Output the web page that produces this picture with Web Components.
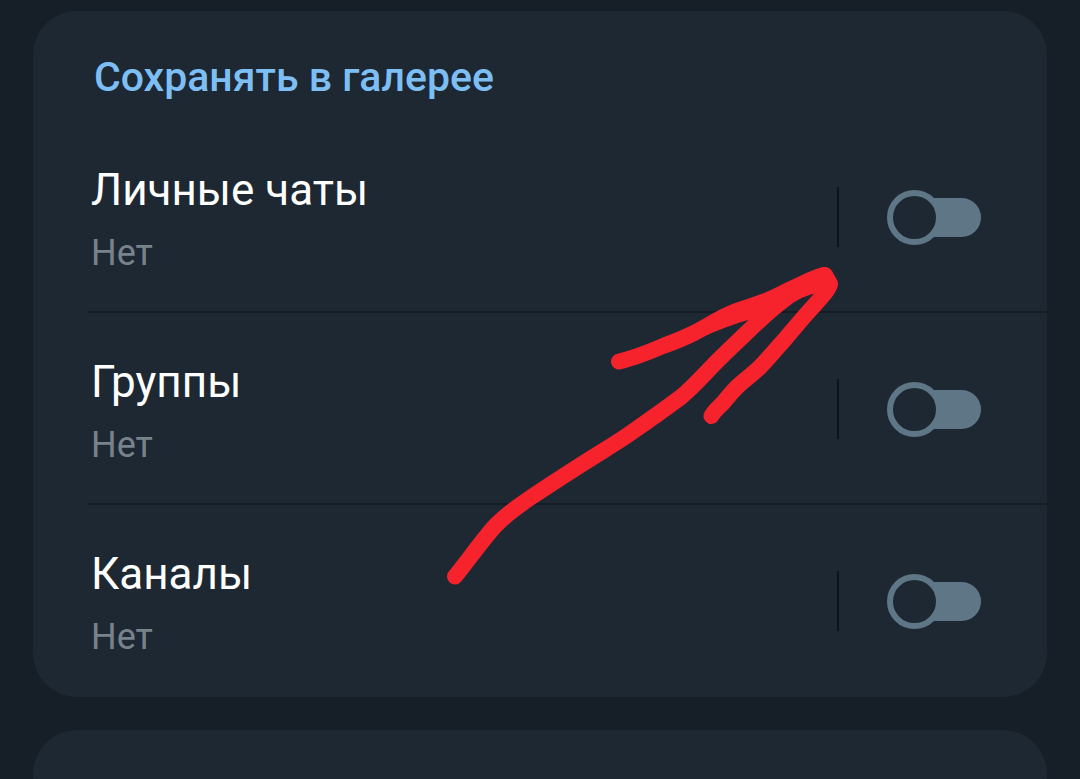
<!DOCTYPE html>
<html lang="ru">
<head>
<meta charset="utf-8">
<meta name="viewport" content="width=device-width, initial-scale=1">
<title>Сохранять в галерее</title>
<style>
  html { background: #161e27; }
  body {
    margin: 0;
    font-family: Roboto, "Noto Sans", sans-serif;
    --card: #1e2833;
    --line: #151c25;
    --separator: #0d131b;
    --accent: #7dbff5;
    --text: #ffffff;
    --muted: #78828b;
    --switch: #5f7686;
  }
</style>
</head>
<body>
<settings-page>
  <settings-card heading="Сохранять в галерее">
    <setting-row label="Личные чаты" value="Нет"></setting-row>
    <setting-row label="Группы" value="Нет"></setting-row>
    <setting-row label="Каналы" value="Нет"></setting-row>
    <drawn-arrow slot="overlay"></drawn-arrow>
  </settings-card>
  <settings-card></settings-card>
</settings-page>

<script>
class SettingsPage extends HTMLElement {
  constructor() {
    super();
    this.attachShadow({ mode: 'open' }).innerHTML = `
      <style>
        :host { display: block; }
        main {
          display: flex; flex-direction: column; gap: 33px; box-sizing: border-box;
          height: 100vh; padding: 11px 33px 0; overflow-y: auto; scrollbar-width: none;
        }
        ::slotted(*) { flex-shrink: 0; }
      </style>
      <main><slot></slot></main>`;
  }
}

class SettingsCard extends HTMLElement {
  constructor() {
    super();
    const heading = this.getAttribute('heading');
    this.attachShadow({ mode: 'open' }).innerHTML = `
      <style>
        :host { display: block; position: relative; min-height: 110px; border-radius: 44px; background: var(--card); }
        h2 { margin: 0; padding: 42px 61px 20px; font-size: 41px; line-height: 48px; font-weight: 500; color: var(--accent); }
      </style>
      ${heading ? '<h2></h2>' : ''}
      <slot></slot>
      <slot name="overlay"></slot>`;
    if (heading) this.shadowRoot.querySelector('h2').textContent = heading;
  }
}

class SettingRow extends HTMLElement {
  constructor() {
    super();
    this.attachShadow({ mode: 'open' }).innerHTML = `
      <style>
        :host { display: block; margin-left: 55px; border-bottom: 2px solid var(--line); }
        :host(:last-of-type) { border-bottom-color: transparent; }
        .row { display: flex; align-items: center; gap: 48px; height: 190px; padding: 1px 66px 0 3px; box-sizing: border-box; }
        label { flex: 1; display: grid; gap: 18px; padding-top: 2px; }
        .name { font-size: 44px; line-height: 52px; color: var(--text); }
        .value { font-size: 36px; line-height: 38px; color: var(--muted); }
        .separator { width: 2px; height: 60px; background: var(--separator); }
        input {
          appearance: none; margin: 0; padding-top: 1px; width: 94px; display: grid; align-items: center; cursor: pointer;
        }
        input::before, input::after { content: ""; grid-area: 1 / 1; box-sizing: border-box; }
        input::before { height: 39px; margin-left: 28px; border-radius: 0 20px 20px 0; background: var(--switch); }
        input::after { width: 55px; height: 55px; border: 6px solid var(--switch); border-radius: 50%; background: var(--card); }
        input:checked::before { margin: 0 28px 0 0; border-radius: 20px 0 0 20px; }
        input:checked::after { justify-self: end; }
      </style>
      <div class="row">
        <label for="toggle"><span class="name"></span><span class="value"></span></label>
        <span class="separator"></span>
        <input id="toggle" type="checkbox" role="switch">
      </div>`;
    this.shadowRoot.querySelector('.name').textContent = this.getAttribute('label');
    this.shadowRoot.querySelector('.value').textContent = this.getAttribute('value');
  }
}

class DrawnArrow extends HTMLElement {
  constructor() {
    super();
    this.attachShadow({ mode: 'open' }).innerHTML = `
      <style>
        :host { display: block; position: absolute; top: 249px; right: 207px; pointer-events: none; }
        svg { display: block; }
      </style>
      <svg width="400" height="330" viewBox="440 260 400 330" fill="none" stroke="#f6232d" stroke-width="16" stroke-linecap="round" stroke-linejoin="round" aria-hidden="true">
        <path d="M455 576.500C470 558 483 539 496 525C505 516 516 507.500 530 498C548 486 565 475 583 463.500C600 452.500 615 444 630 433.500C648 421 665 409 681 397C692 388 700 379 710 368.500C723 355 736 343 750 329.500C763 317 775 306 789 296C796 291 801 289 808 287L826 283"/>
        <path d="M619 361.500C635 358 649 352 663 346C674 342 684 338 693 333.500C706 327 719 318 733 312.500C745 308 756 305 767 300.500C777 296.500 785 291.500 793 288C804 283 813 278 824 275"/>
        <path d="M825 275L830 284C829 290 819 300 810 310C801 320 792 331 783 341.500C775 350 768 359 760 367C752 375 744 380 737 387C731 393 727 398 723 403C718 408 714 411 711.500 416"/>
        <path d="M696 340Q728 325 755 318L790 296L822 280L790 288L720 316Z" fill="#f6232d" stroke="none"/>
      </svg>`;
  }
}

customElements.define('settings-page', SettingsPage);
customElements.define('settings-card', SettingsCard);
customElements.define('setting-row', SettingRow);
customElements.define('drawn-arrow', DrawnArrow);
</script>
</body>
</html>
